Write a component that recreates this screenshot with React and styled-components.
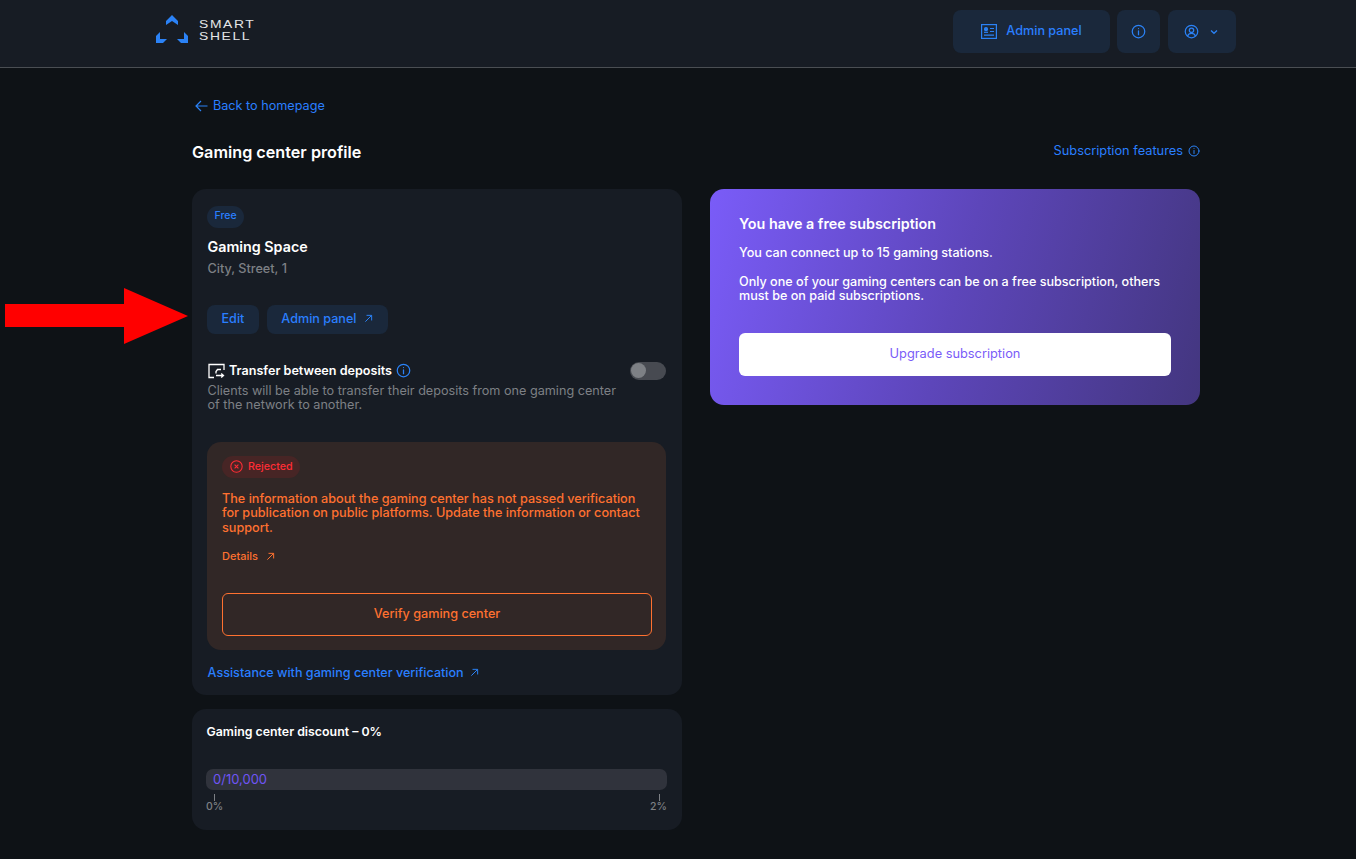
import React from "react";
import styled, { createGlobalStyle } from "styled-components";

const Blue = "#2a7fff";
const IconBlue = "#2b82f6";
const Orange = "#ff7130";

const Global = createGlobalStyle`
  html, body { margin: 0; padding: 0; background: #0e1216; }
  body { font-family: Inter, "Liberation Sans", sans-serif; color: #fff; }
  * { box-sizing: border-box; }
  a { text-decoration: none; }
`;

const Page = styled.div`
  width: 1356px;
  height: 859px;
  position: relative;
  overflow: hidden;
  background: #0e1216;
`;
const Header = styled.header`
  height: 68px;
  background: #171c24;
  border-bottom: 1px solid #4a4e53;
  display: flex;
  align-items: flex-start;
  justify-content: space-between;
  padding: 10px 120px 0 155px;
`;
const Logo = styled.div`
  display: flex;
  align-items: center;
  gap: 10px;
  height: 40px;
  margin-top: -1px;
`;
const LogoText = styled.div`
  font-family: "Liberation Sans", Arial, sans-serif;
  font-size: 11px;
  line-height: 12px;
  letter-spacing: 1.3px;
  color: #e4e6e8;
  margin-top: 2px;
  transform: scaleX(1.26);
  transform-origin: left center;
`;
const HeaderActions = styled.div`
  display: flex;
`;
const HeaderButton = styled.div`
  height: 43px;
  width: ${(p) => p.$w}px;
  margin-left: ${(p) => p.$ml || 0}px;
  padding-right: ${(p) => p.$pr || 0}px;
  border-radius: 8px;
  background: #1a283b;
  display: flex;
  align-items: center;
  justify-content: center;
  gap: 9px;
`;
const HeaderLabel = styled.span`
  color: ${Blue};
  font-size: 12.65px;
  font-weight: 500;
  margin-top: -3px;
`;
const Main = styled.main`
  width: 1008px;
  margin-left: 192px;
`;
const BackLink = styled.a`
  display: flex;
  align-items: center;
  gap: 5px;
  margin: 29px 0 0 3px;
  height: 17px;
  color: ${Blue};
  font-size: 12.65px;
  line-height: 17px;
`;
const TitleRow = styled.div`
  display: flex;
  justify-content: space-between;
  align-items: flex-start;
  margin-top: 27px;
  height: 27px;
`;
const Title = styled.h1`
  margin: 0;
  font-size: 16.2px;
  line-height: 22px;
  font-weight: 600;
  color: #fff;
`;
const Features = styled.a`
  display: flex;
  align-items: center;
  gap: 5px;
  color: ${Blue};
  font-size: 12.8px;
  line-height: 20px;
  height: 20px;
`;
const Columns = styled.div`
  display: grid;
  grid-template-columns: 490px 490px;
  gap: 28px;
  margin-top: 21px;
  align-items: start;
`;
const LeftCol = styled.div`
  display: flex;
  flex-direction: column;
  gap: 14px;
`;
const Card = styled.section`
  background: #171c24;
  border-radius: 14px;
  padding: ${(p) => p.$pad};
  height: ${(p) => p.$h}px;
`;
const Pill = styled.span`
  display: inline-flex;
  align-items: center;
  height: 22px;
  padding: 0 7.5px 2px;
  border-radius: 11px;
  background: #1a283b;
  color: ${Blue};
  font-size: 10.5px;
  font-weight: 500;
`;
const Name = styled.div`
  margin: 9px 0 0 0.5px;
  font-size: 14.3px;
  line-height: 20px;
  font-weight: 600;
  color: #fff;
`;
const Address = styled.div`
  margin: 3px 0 0 0.5px;
  font-size: 12.65px;
  line-height: 18px;
  font-weight: 500;
  color: #7d8085;
`;
const Buttons = styled.div`
  display: flex;
  gap: 8px;
  margin-top: 27px;
`;
const SmallButton = styled.a`
  height: 29px;
  padding: 0 14.5px 2px;
  border-radius: 8px;
  background: #1a283b;
  color: ${Blue};
  font-size: 12.6px;
  font-weight: 500;
  display: flex;
  align-items: center;
  gap: 8px;
`;
const TransferRow = styled.div`
  display: flex;
  justify-content: space-between;
  margin-top: 28px;
`;
const TransferTitle = styled.div`
  display: flex;
  align-items: center;
  gap: 4px;
  height: 18px;
  font-size: 12.6px;
  line-height: 18px;
  font-weight: 600;
  color: #fff;
`;
const TransferText = styled.p`
  margin: 4px 0 0 0.5px;
  width: 420px;
  font-size: 12.65px;
  line-height: 14px;
  color: #7d8085;
`;
const Toggle = styled.div`
  width: 36px;
  height: 18px;
  border-radius: 9px;
  background: #474a51;
  padding: 1.5px 0 0 0.5px;
  flex: none;
`;
const Knob = styled.div`
  width: 15px;
  height: 15px;
  border-radius: 50%;
  background: #7d8085;
`;
const Verify = styled.div`
  margin-top: 30px;
  height: 208px;
  border-radius: 14px;
  background: #312726;
  padding: 14px 14px 0 15px;
`;
const RejectedPill = styled.span`
  display: inline-flex;
  align-items: center;
  gap: 5px;
  height: 22px;
  padding: 0 7px 0 8px;
  border-radius: 11px;
  background: #472525;
  color: #ff2d35;
  font-size: 10.7px;
  font-weight: 500;
`;
const VerifyText = styled.p`
  margin: 14px 0 0;
  width: 425px;
  font-size: 12.65px;
  line-height: 14.5px;
  font-weight: 500;
  color: ${Orange};
`;
const Details = styled.a`
  display: flex;
  align-items: center;
  gap: 8px;
  margin-top: 14px;
  height: 14px;
  font-size: 11px;
  font-weight: 500;
  color: ${Orange};
`;
const VerifyButton = styled.a`
  display: flex;
  align-items: center;
  justify-content: center;
  margin-top: 30px;
  height: 43px;
  padding-bottom: 2px;
  border: 1px solid ${Orange};
  border-radius: 6px;
  color: ${Orange};
  font-size: 12.65px;
  font-weight: 500;
`;
const Assist = styled.a`
  display: flex;
  align-items: center;
  gap: 6px;
  margin: 14px 0 0 0.5px;
  height: 18px;
  font-size: 12.6px;
  font-weight: 500;
  color: ${Blue};
`;
const DiscountTitle = styled.div`
  margin: 1px 0 0 0.5px;
  font-size: 12.35px;
  line-height: 18px;
  font-weight: 600;
  color: #fff;
`;
const Bar = styled.div`
  margin-top: 28px;
  height: 21px;
  border-radius: 7px;
  background: #30333c;
  padding-left: 7px;
  font-size: 13px;
  line-height: 21px;
  color: #6f55f5;
`;
const Scale = styled.div`
  display: flex;
  justify-content: space-between;
  margin-top: 4px;
`;
const ScaleMark = styled.div`
  display: flex;
  flex-direction: column;
  align-items: ${(p) => (p.$end ? "flex-end" : "flex-start")};
  font-size: 10.5px;
  line-height: 12px;
  font-weight: 500;
  color: #7d8085;
`;
const Tick = styled.i`
  display: block;
  width: 1px;
  height: 7px;
  margin: ${(p) => (p.$end ? "0 7px 0 0" : "0 0 0 8px")};
  background: #7d8085;
`;
const Promo = styled.section`
  height: 216px;
  border-radius: 14px;
  padding: 25px 29px 0;
  background: linear-gradient(105deg, #7a5cf8 0%, #5d46ba 50%, #43367f 100%);
  color: #fff;
`;
const PromoTitle = styled.div`
  font-size: 14.35px;
  line-height: 20px;
  font-weight: 600;
`;
const PromoText = styled.p`
  margin: ${(p) => p.$mt}px 0 0;
  font-size: 12.6px;
  line-height: 14.5px;
  font-weight: 500;
  width: 430px;
`;
const UpgradeButton = styled.a`
  display: flex;
  align-items: center;
  justify-content: center;
  margin-top: 29px;
  height: 43px;
  padding-bottom: 2px;
  border-radius: 6px;
  background: #fff;
  color: #7a5cf8;
  font-size: 12.8px;
  font-weight: 400;
`;
const Annotation = styled.svg`
  position: absolute;
  left: 0;
  top: 280px;
`;

const Info = ({ s = 16, c = IconBlue }) => (
  <svg width={s} height={s} viewBox="0 0 24 24" fill="none" stroke={c} strokeWidth="2" strokeLinecap="round" style={{ flex: "none" }}>
    <circle cx="12" cy="12" r="10" />
    <path d="M12 11v6M12 7.2v.1" />
  </svg>
);
const Out = ({ s = 10, c = IconBlue }) => (
  <svg width={s} height={s} viewBox="0 0 10 10" fill="none" stroke={c} strokeWidth="1.1" style={{ flex: "none" }}>
    <path d="M1.5 8.5L8.3 1.7M2.8 1.5h5.7v5.7" />
  </svg>
);

export default function App() {
  return (
    <Page>
      <Global />
      <Header>
        <Logo>
          <svg width="34" height="30" viewBox="0 0 34 30" fill={IconBlue}>
            <path d="M17 1L23 7V11L17 7L11 11V7Z" />
            <path d="M1 22L5 18V25H12L8 29H1Z" />
            <path d="M33 22L29 18V25H22L26 29H33Z" />
          </svg>
          <LogoText>
            SMART
            <br />
            SHELL
          </LogoText>
        </Logo>
        <HeaderActions>
          <HeaderButton $w={157}>
            <svg width="16" height="15" viewBox="0 0 16 15" fill="none" stroke={IconBlue} strokeWidth="1.2">
              <rect x="0.6" y="0.6" width="14.8" height="13.8" />
              <path d="M3 11.200h10M9 4.500h4M9 7.500h4" />
              <circle cx="5" cy="5.200" r="1.500" fill={IconBlue} />
              <path d="M3 8.300h4" />
            </svg>
            <HeaderLabel>Admin panel</HeaderLabel>
          </HeaderButton>
          <HeaderButton $w={43} $ml={7}>
            <Info s={15} />
          </HeaderButton>
          <HeaderButton $w={68} $ml={8} $pr={3}>
            <svg width="15" height="15" viewBox="0 0 24 24" fill="none" stroke={IconBlue} strokeWidth="2">
              <circle cx="12" cy="12" r="10" />
              <circle cx="12" cy="10" r="3.500" />
              <path d="M5.500 19.500c1.200-3 3.500-4.500 6.500-4.500s5.300 1.500 6.500 4.500" />
            </svg>
            <svg width="8" height="6" viewBox="0 0 8 6" fill="none" stroke={IconBlue} strokeWidth="1.300" style={{ marginLeft: 2 }}>
              <path d="M1 1.500L4 4.300L7 1.500" />
            </svg>
          </HeaderButton>
        </HeaderActions>
      </Header>
      <Main>
        <BackLink>
          <svg width="13" height="12" viewBox="0 0 13 12" fill="none" stroke={IconBlue} strokeWidth="1.200">
            <path d="M12.500 6H1M6 1L1 6L6 11" />
          </svg>
          Back to homepage
        </BackLink>
        <TitleRow>
          <Title>Gaming center profile</Title>
          <Features>
            Subscription features
            <Info s={12} />
          </Features>
        </TitleRow>
        <Columns>
          <LeftCol>
            <Card $pad="14px 16px 0 15px" $h={506}>
              <Pill>Free</Pill>
              <Name>Gaming Space</Name>
              <Address>City, Street, 1</Address>
              <Buttons>
                <SmallButton>Edit</SmallButton>
                <SmallButton>
                  Admin panel
                  <Out s={9} />
                </SmallButton>
              </Buttons>
              <TransferRow>
                <div>
                  <TransferTitle>
                    <svg width="18" height="16" viewBox="0 0 18 16" fill="none" stroke="#fff" strokeWidth="1.300" style={{ flex: "none" }}>
                      <path d="M7 14.500H2V1.500H17V7" />
                      <path d="M14 6.500H10.500L9 8.500V10.500" />
                      <path d="M9 12.500h7M14.200 10.500L16.500 12.500L14.200 14.500" />
                    </svg>
                    Transfer between deposits
                    <Info s={15} />
                  </TransferTitle>
                  <TransferText>
                    Clients will be able to transfer their deposits from one gaming center of the network to another.
                  </TransferText>
                </div>
                <Toggle>
                  <Knob />
                </Toggle>
              </TransferRow>
              <Verify>
                <RejectedPill>
                  <svg width="13" height="13" viewBox="0 0 24 24" fill="none" stroke="#ff2d35" strokeWidth="2">
                    <circle cx="12" cy="12" r="10.500" />
                    <path d="M8.500 8.500l7 7M15.500 8.500l-7 7" />
                  </svg>
                  Rejected
                </RejectedPill>
                <VerifyText>
                  The information about the gaming center has not passed verification for publication on public platforms. Update the information or contact support.
                </VerifyText>
                <Details>
                  Details
                  <Out s={9} c={Orange} />
                </Details>
                <VerifyButton>Verify gaming center</VerifyButton>
              </Verify>
              <Assist>
                Assistance with gaming center verification
                <Out s={9} />
              </Assist>
            </Card>
            <Card $pad="13px 15px 0 14px" $h={121}>
              <DiscountTitle>Gaming center discount – 0%</DiscountTitle>
              <Bar>0/10,000</Bar>
              <Scale>
                <ScaleMark>
                  <Tick />
                  0%
                </ScaleMark>
                <ScaleMark $end>
                  <Tick $end />
                  2%
                </ScaleMark>
              </Scale>
            </Card>
          </LeftCol>
          <Promo>
            <PromoTitle>You have a free subscription</PromoTitle>
            <PromoText $mt={12}>You can connect up to 15 gaming stations.</PromoText>
            <PromoText $mt={14}>
              Only one of your gaming centers can be on a free subscription, others must be on paid subscriptions.
            </PromoText>
            <UpgradeButton>Upgrade subscription</UpgradeButton>
          </Promo>
        </Columns>
      </Main>
      <Annotation width="200" height="72" viewBox="0 0 200 72">
        <path d="M5 24H124V8L188 36L124 64V47H5Z" fill="#ff0000" />
      </Annotation>
    </Page>
  );
}
